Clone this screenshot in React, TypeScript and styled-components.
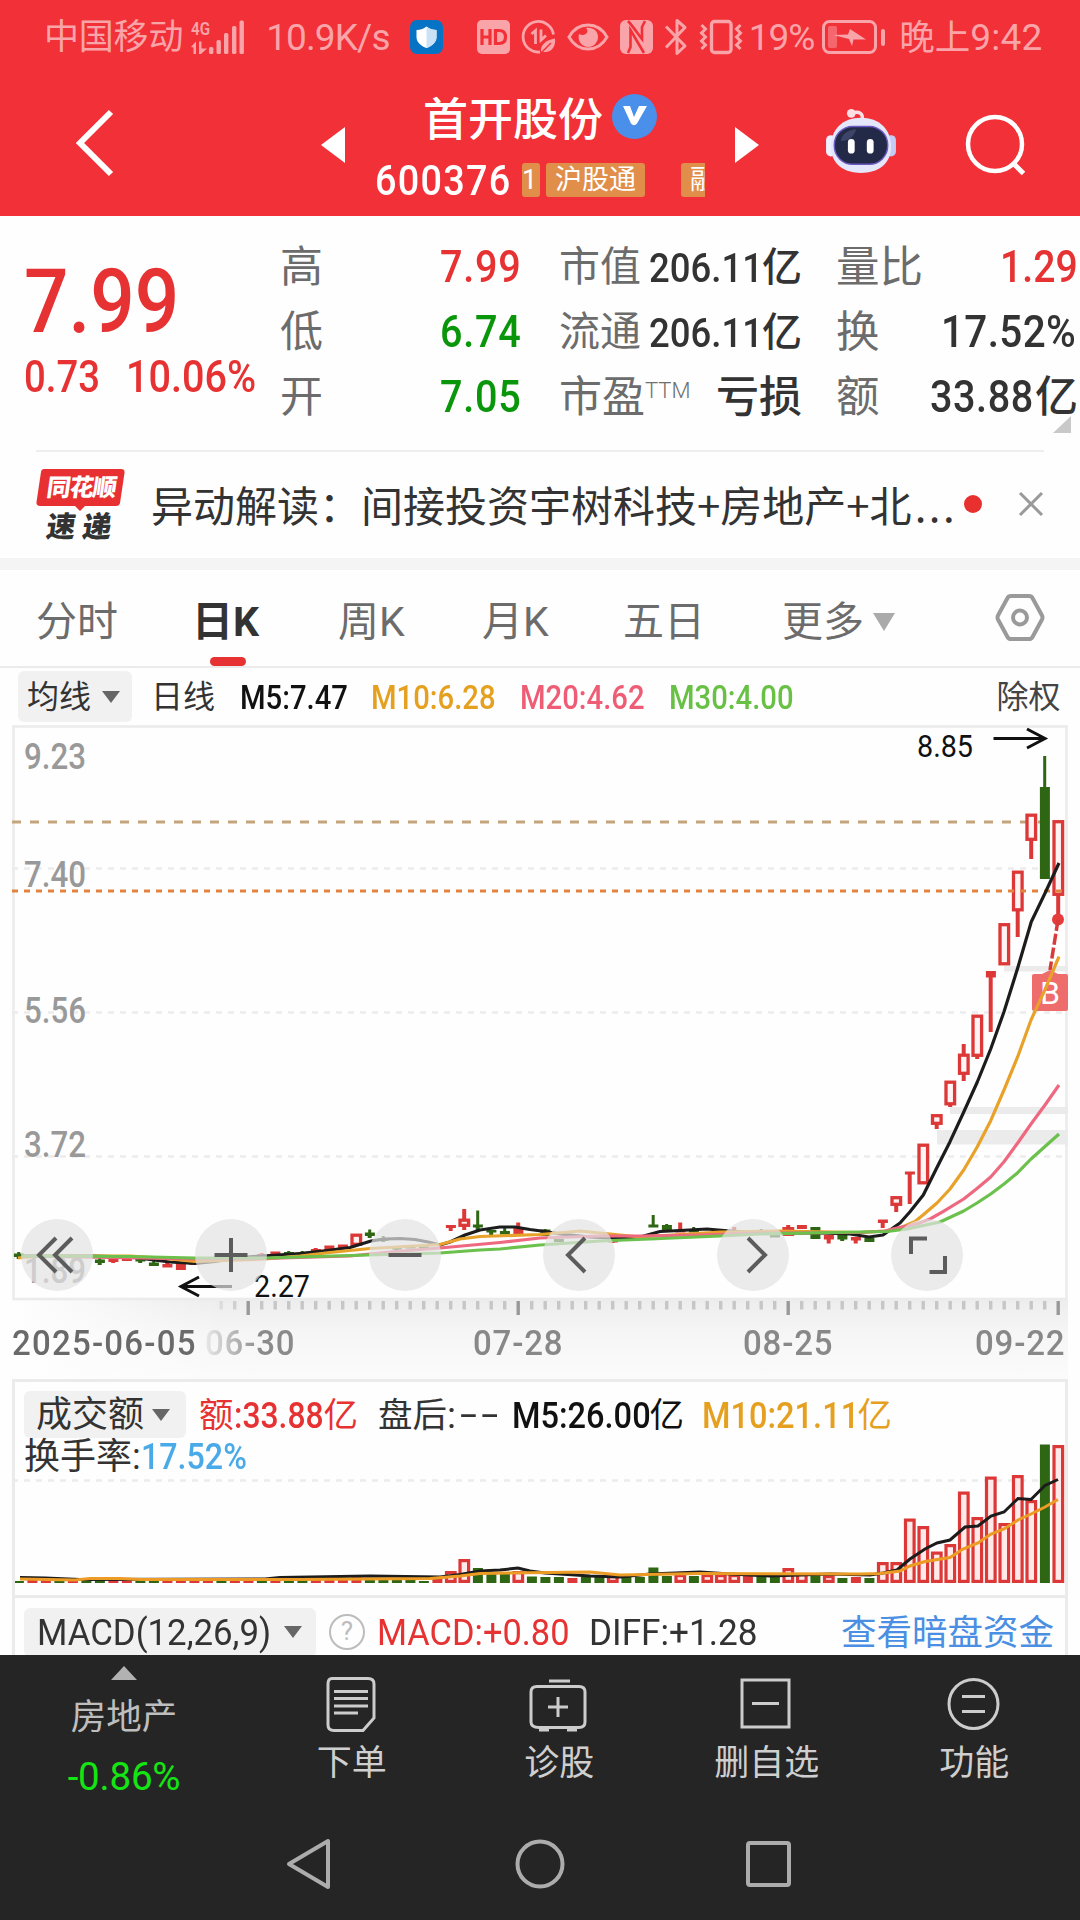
import React from 'react';
import styled, { createGlobalStyle, css } from 'styled-components';

const RED = '#e63232';
const CANDLE_RED = '#dc3838';
const CANDLE_GREEN = '#2f6614';
const GREEN = '#0a960a';
const INK = '#333333';
const MUTED = '#6c6c6c';
const AMBER = '#e5a020';
const PINK = '#ee5d75';
const LIME = '#68c044';

const GlobalStyle = createGlobalStyle`
  * { box-sizing: border-box; }
  html, body { margin: 0; padding: 0; }
  body {
    width: 1080px;
    height: 1920px;
    overflow: hidden;
    background: #fefefe;
    font-family: Roboto, "Noto Sans CJK SC", sans-serif;
    color: ${INK};
  }
  svg { display: block; flex: none; overflow: visible; }
`;

const Screen = styled.div`
  width: 1080px;
  height: 1920px;
  display: flex;
  flex-direction: column;
  overflow: hidden;
`;

type TextProps = { $size: number; $color?: string; $ls?: number; $weight?: number; $gap?: number };
const Text = styled.span<TextProps>`
  flex: none;
  white-space: nowrap;
  line-height: 1.1;
  padding-top: 3px;
  font-size: ${(p) => p.$size}px;
  font-weight: ${(p) => p.$weight ?? 400};
  letter-spacing: ${(p) => p.$ls ?? 0}px;
  margin-left: ${(p) => p.$gap ?? 0}px;
  ${(p) => p.$color && css`color: ${p.$color};`}
`;

/* Figures are set in a narrowed cut: $w is the slot they take, $sx the narrowing. */
const Figure = styled(Text)<{ $w: number; $sx: number }>`
  width: ${(p) => p.$w}px;
  transform: scaleX(${(p) => p.$sx});
  transform-origin: 0 50%;
`;

const Row = styled.div<{ $h?: number; $pl?: number }>`
  display: flex;
  align-items: center;
  ${(p) => p.$h && css`height: ${p.$h}px;`}
  padding-left: ${(p) => p.$pl ?? 0}px;
`;

const Spaced = styled.div<{ $gap: number; $lift?: number }>`
  flex: none;
  margin-left: ${(p) => p.$gap}px;
  margin-bottom: ${(p) => p.$lift ?? 0}px;
`;

/* ---------- status bar and header ---------- */

const TopArea = styled.header`
  flex: none;
  height: 216px;
  background: #f13038;
  color: #fff;
`;

const StatusBar = styled.div`
  height: 74px;
  padding-left: 44px;
  display: flex;
  align-items: center;
  color: #f9a4a8;
`;

const HeaderRow = styled.div`
  height: 142px;
  padding-left: 74px;
  display: flex;
  align-items: center;
`;

const TitleBlock = styled.div`
  width: 330px;
  margin-left: 30px;
  display: flex;
  flex-direction: column;
`;

const TitleLine = styled.div`
  height: 70px;
  display: flex;
  align-items: center;
  padding-left: 48px;
`;

const CodeLine = styled.div`
  height: 52px;
  display: flex;
  align-items: center;
`;

const Verified = styled.span`
  width: 45px;
  height: 45px;
  margin: 0 0 6px 9px;
  border-radius: 50%;
  background: #4a90ea;
  display: grid;
  place-items: center;
`;

const TagStrip = styled.div`
  width: 183px;
  height: 34px;
  margin-left: 12px;
  display: flex;
  overflow: hidden;
`;

const Tag = styled.span<{ $w: number; $gap?: number; $pl?: number }>`
  flex: none;
  width: ${(p) => p.$w}px;
  height: 34px;
  margin-left: ${(p) => p.$gap ?? 0}px;
  padding-left: ${(p) => p.$pl ?? 0}px;
  border-radius: 3px;
  overflow: hidden;
  background: #e28e4b;
  font-size: 27px;
  line-height: 35px;
  white-space: nowrap;
`;

function StatusIcons() {
  return (
    <>
      <Spaced $gap={7}>
        <svg width="54" height="36" viewBox="191 18 54 36" fill="#f9a4a8">
          <text x="192" y="33.500" fontSize="19" fontWeight="600" textLength="19" lengthAdjust="spacingAndGlyphs">4G</text>
          <path d="M192 46 L197 40.5 V53 H194.5 V46.5 Z M200 40.5 H202.5 V47.5 L208 47.5 L202 53 H200 Z" />
          <rect x="210" y="46" width="4.4" height="7" rx="1.5" />
          <rect x="217.5" y="39" width="4.4" height="14" rx="1.5" />
          <rect x="225" y="32" width="4.4" height="21" rx="1.5" />
          <rect x="233" y="25" width="4.4" height="28" rx="1.5" />
          <rect x="240.5" y="19.5" width="4.4" height="33.5" rx="1.5" />
        </svg>
      </Spaced>
      <Text $size={37} $gap={22} $ls={-0.9}>10.9K/s</Text>
      <Spaced $gap={20}>
        <svg width="33" height="34" viewBox="0 0 33 34">
          <rect width="33" height="34" rx="7" fill="#0773c4" />
          <path d="M16.5 6.5 C20 9.5 23 9.8 26.5 10 V17 C26.5 22.5 22 26 16.5 28 C11 26 6.5 22.5 6.5 17 V10 C10 9.8 13 9.5 16.5 6.5Z" fill="#fff" />
          <path d="M16.5 6.5 C20 9.5 23 9.8 26.5 10 V17 C26.5 22.5 22 26 16.5 28Z" fill="#c9e2f6" />
        </svg>
      </Spaced>
      <Spaced $gap={34}>
        <svg width="33" height="34" viewBox="0 0 33 34">
          <rect width="33" height="34" rx="5" fill="#f9a4a8" />
          <path d="M5 9 V25 M13 9 V25 M5 17 H13 M18.500 10.500 V23.500 H22 C27.500 23.500 28.500 20 28.500 17 C28.500 14 27.500 10.500 22 10.500Z" stroke="#f13038" strokeWidth="3.2" fill="none" />
        </svg>
      </Spaced>
      <Spaced $gap={12}>
        <svg width="34" height="34" viewBox="0 0 34 34" fill="none" stroke="#f9a4a8" strokeWidth="2.800">
          <path d="M18 32 A15.300 15.300 0 1 1 31.500 14.500" />
          <path d="M9.500 14 L13.500 10.500 V24" />
          <path d="M19 9.500 V20 L24 15.500" />
          <path d="M19 31.500 C18 25 24 20 33 18.500 C34 27 29 34 19 31.500Z" fill="#f9a4a8" stroke="none" />
          <path d="M20 32 L29 23" stroke="#f13038" strokeWidth="1.500" />
        </svg>
      </Spaced>
      <Spaced $gap={11}>
        <svg width="42" height="30" viewBox="0 0 42 30" fill="none" stroke="#f9a4a8" strokeWidth="3">
          <path d="M2 15 C11 -1 31 -1 40 15 C31 31 11 31 2 15Z" />
          <path d="M19 6 C23 10 18 15 12 12 C10 20 16 25 21 25 C27 25 31 20 31 15 C31 9 26 5 19 6Z" fill="#f9a4a8" stroke="none" />
        </svg>
      </Spaced>
      <Spaced $gap={11}>
        <svg width="33" height="34" viewBox="0 0 33 34">
          <rect width="33" height="34" rx="6" fill="#f9a4a8" />
          <path d="M8 1 C12 5 18 14 22 19 V7 L25 1 M8 33 L10.500 27 V10 L24 33" fill="none" stroke="#f13038" strokeWidth="2.600" />
        </svg>
      </Spaced>
      <Spaced $gap={11}>
        <svg width="24" height="38" viewBox="0 0 24 38" fill="none" stroke="#f9a4a8" strokeWidth="3" strokeLinejoin="round">
          <path d="M2 8.500 L21 28 L13 35.500 V2.500 L21 9.500 L2 29.500" />
        </svg>
      </Spaced>
      <Spaced $gap={12}>
        <svg width="42" height="34" viewBox="0 0 42 34" fill="none" stroke="#f9a4a8" strokeWidth="3">
          <rect x="11.500" y="1.500" width="19.500" height="31" rx="3" strokeWidth="3.400" />
          <path d="M1.500 5 L5.500 9 L1.500 13 L5.500 17 L1.500 21 L5.500 25 L1.500 29" />
          <path d="M40.500 5 L36.500 9 L40.500 13 L36.500 17 L40.500 21 L36.500 25 L40.500 29" />
        </svg>
      </Spaced>
      <Text $size={37} $gap={7} $ls={-1}>19%</Text>
      <Spaced $gap={8}>
        <svg width="64" height="34" viewBox="0 0 64 34">
          <rect x="1.500" y="1.500" width="52" height="31" rx="6" fill="none" stroke="#f9a4a8" strokeWidth="3" />
          <rect x="6" y="6" width="9" height="22" rx="2" fill="#f5676d" />
          <path d="M11 15 L26 14.500 L28 9 L44 19.500 L31.500 19.500 L30 26 L27 19Z" fill="#f9a4a8" />
          <rect x="59" y="9" width="4" height="17" rx="2" fill="#f9a4a8" />
        </svg>
      </Spaced>
      <Text $size={35.500} $gap={13}>晚上</Text>
      <Text $size={37} $gap={0} $ls={0.200}>9:42</Text>
    </>
  );
}

function Robot() {
  return (
    <svg width="72" height="66" viewBox="0 0 74 68">
      <circle cx="27" cy="5.500" r="4.500" fill="#fbdfe4" />
      <path d="M28 5 C36 3 39 6 38.500 12" fill="none" stroke="#fbdfe4" strokeWidth="3.500" />
      <rect x="1" y="28" width="10" height="22" rx="5" fill="#eef0ff" />
      <rect x="63" y="28" width="10" height="22" rx="5" fill="#c4ccf4" />
      <path d="M37 10 C56 10 68 22 68 40 C68 58 54 67 37 67 C20 67 6 58 6 40 C6 22 18 10 37 10Z" fill="#e4e6fa" />
      <rect x="9.500" y="19" width="55" height="39" rx="19" fill="#232a48" stroke="#6a58c0" strokeWidth="1.500" />
      <path d="M16 34 C18 24 28 22 32 22 C30 30 24 34 16 34Z" fill="#3c4468" />
      <rect x="23.500" y="32" width="7" height="15" rx="3.500" fill="#fff" />
      <rect x="43" y="32" width="7" height="15" rx="3.500" fill="#fff" />
    </svg>
  );
}

function Header() {
  return (
    <TopArea>
      <StatusBar>
        <Text $size={35} $ls={-0.2}>中国移动</Text>
        <StatusIcons />
      </StatusBar>
      <HeaderRow>
        <Spaced $gap={0} $lift={5}>
          <svg width="42" height="68" viewBox="0 0 42 68"><path d="M37 3 L6 34 L37 65" fill="none" stroke="#fff" strokeWidth="6" /></svg>
        </Spaced>
        <Spaced $gap={205}>
          <svg width="24" height="36" viewBox="0 0 24 36"><path d="M24 0 V36 L0 18Z" fill="#fff" /></svg>
        </Spaced>
        <TitleBlock>
          <TitleLine>
            <Text $size={45} $weight={500}>首开股份</Text>
            <Verified>
              <svg width="24" height="20" viewBox="0 0 24 20"><path d="M0 0 H7 L11 11 L16 0 H24 L14 17.500 Q11 21 8 17.500Z" fill="#fff" /></svg>
            </Verified>
          </TitleLine>
          <CodeLine>
            <Figure $w={135} $sx={0.9} $size={42} $weight={500} $ls={1.400}>600376</Figure>
            <TagStrip>
              <Tag $w={18}>1</Tag>
              <Tag $w={99} $gap={6} $pl={9}>沪股通</Tag>
              <Tag $w={46} $gap={36} $pl={9}>融</Tag>
            </TagStrip>
          </CodeLine>
        </TitleBlock>
        <Spaced $gap={30}>
          <svg width="24" height="36" viewBox="0 0 24 36"><path d="M0 0 V36 L24 18Z" fill="#fff" /></svg>
        </Spaced>
        <Spaced $gap={66} $lift={8}><Robot /></Spaced>
        <Spaced $gap={68} $lift={2}>
          <svg width="62" height="64" viewBox="0 0 62 64" fill="none" stroke="#fff" strokeWidth="4.500">
            <circle cx="30" cy="32" r="27" />
            <path d="M48 51 L58.500 61.500" strokeWidth="5" />
          </svg>
        </Spaced>
      </HeaderRow>
    </TopArea>
  );
}

/* ---------- quote summary ---------- */

const Quote = styled.section`
  flex: none;
  height: 234px;
  display: flex;
  padding-top: 18px;
`;

const PriceBlock = styled.div`
  width: 280px;
  padding: 17px 0 0 24px;
`;

const BigPrice = styled.div`
  width: 160px;
  height: 100px;
  font-size: 89px;
  line-height: 101px;
  font-weight: 500;
  transform: scaleX(0.88);
  transform-origin: 0 50%;
  color: ${RED};
`;

const StatCol = styled.div<{ $w: number; $gap?: number }>`
  flex: none;
  width: ${(p) => p.$w}px;
  margin-left: ${(p) => p.$gap ?? 0}px;
`;

const Stat = styled.div`
  height: 65px;
  display: flex;
  align-items: center;
  justify-content: space-between;
`;

const Sup = styled.sup`
  font-size: 22px;
  line-height: 1;
  vertical-align: 14px;
  font-weight: 300;
  color: #707070;
`;

const CornerWrap = styled.div`
  position: relative;
`;

const Corner = styled.i`
  position: absolute;
  right: 7px;
  bottom: -4px;
  border-left: 18px solid transparent;
  border-bottom: 17px solid #c9c9c9;
`;

function QuotePanel() {
  return (
    <Quote>
      <PriceBlock>
        <BigPrice>7.99</BigPrice>
        <Row $h={50}>
          <Figure $w={102} $sx={0.88} $size={43.5} $weight={500} $color={RED}>0.73</Figure>
          <Figure $w={140} $sx={0.91} $size={43.5} $weight={500} $color={RED}>10.06%</Figure>
        </Row>
      </PriceBlock>
      <StatCol $w={241}>
        {[['高', '7.99', RED], ['低', '6.74', GREEN], ['开', '7.05', GREEN]].map(([label, value, color]) => (
          <Stat key={label}>
            <Text $size={43} $color={MUTED}>{label}</Text>
            <Figure $w={81} $sx={0.91} $size={43.5} $weight={500} $ls={0.800} $color={color}>{value}</Figure>
          </Stat>
        ))}
      </StatCol>
      <StatCol $w={243} $gap={38}>
        {['市值', '流通'].map((label) => (
          <Stat key={label}>
            <Text $size={41} $color={MUTED}>{label}</Text>
            <Row>
              <Figure $w={113} $sx={0.88} $size={41.5} $weight={500}>206.11</Figure>
              <Text $size={40} $weight={500}>亿</Text>
            </Row>
          </Stat>
        ))}
        <Stat>
          <Text $size={43} $color={MUTED}>市盈<Sup>TTM</Sup></Text>
          <Text $size={43} $weight={500}>亏损</Text>
        </Stat>
      </StatCol>
      <StatCol $w={242} $gap={34}>
        <CornerWrap>
          <Stat>
            <Text $size={43.5} $color={MUTED}>量比</Text>
            <Figure $w={78} $sx={0.9} $size={43.5} $weight={500} $color={RED}>1.29</Figure>
          </Stat>
          <Stat>
            <Text $size={43.5} $color={MUTED}>换</Text>
            <Figure $w={137} $sx={0.93} $size={43.5} $weight={500} $ls={0.400}>17.52%</Figure>
          </Stat>
          <Stat>
            <Text $size={43.5} $color={MUTED}>额</Text>
            <Row>
              <Figure $w={105} $sx={0.91} $size={43.5} $weight={500} $ls={0.600}>33.88</Figure>
              <Text $size={43} $weight={500}>亿</Text>
            </Row>
          </Stat>
          <Corner />
        </CornerWrap>
      </StatCol>
    </Quote>
  );
}

/* ---------- news strip ---------- */

const News = styled.section`
  flex: none;
  height: 108px;
  margin: 0 36px;
  border-top: 2px solid #eeeeee;
  display: flex;
  align-items: center;
`;

const NewsText = styled.div`
  margin-left: 25px;
  padding-bottom: 3px;
  width: 809px;
  font-family: "Noto Sans CJK SC", sans-serif;
  font-size: 42px;
  line-height: 50px;
  white-space: nowrap;
`;

const Dots = styled.span`
  margin-left: 3px;
  letter-spacing: 2.500px;
`;

const Band = styled.div`
  flex: none;
  height: 12px;
  background: #f4f4f4;
`;

const Dot = styled.i`
  width: 18px;
  height: 18px;
  margin: 0 0 3px 6px;
  border-radius: 50%;
  background: #e8302f;
`;

function NewsStrip() {
  return (
    <News>
      <svg width="90" height="76" viewBox="0 0 90 76" fontFamily="'Noto Sans CJK SC', sans-serif">
        <path d="M8 2 H85 Q89 2 88.500 6 L84 36 Q83.500 39 80 39 H49 L44 44 L39 39 H4 Q0 39 0.500 35 L5 5 Q5.500 2 8 2Z" fill="#e83032" />
        <text x="14" y="29.500" fontSize="24" fontWeight="900" fill="#fff" transform="skewX(-8)" textLength="70">同花顺</text>
        <text x="19" y="70" fontSize="29" fontWeight="900" fill="#333" transform="skewX(-8)" textLength="65">速递</text>
      </svg>
      <NewsText>异动解读：间接投资宇树科技+房地产+北<Dots>...</Dots></NewsText>
      <Dot />
      <Spaced $gap={36} $lift={3}>
        <svg width="26" height="26" viewBox="0 0 26 26"><path d="M2 2 L24 24 M24 2 L2 24" stroke="#9a9a9a" strokeWidth="3" /></svg>
      </Spaced>
    </News>
  );
}

/* ---------- period tabs ---------- */

const Tabs = styled.nav`
  flex: none;
  height: 98px;
  border-bottom: 2px solid #ebebeb;
  display: flex;
  padding-left: 36px;
`;

const Tab = styled.div<{ $w: number; $active?: boolean }>`
  width: ${(p) => p.$w}px;
  font-size: 41px;
  font-weight: ${(p) => (p.$active ? 700 : 400)};
  color: ${(p) => (p.$active ? INK : MUTED)};
  white-space: nowrap;
  display: flex;
  flex-direction: column;
  line-height: 48px;
  padding-top: 28px;
`;

const Underline = styled.i`
  width: 36px;
  height: 9px;
  margin: 11px 0 0 18px;
  border-radius: 5px;
  background: ${RED};
`;

const Caret = styled.i<{ $w: number; $h: number; $gap?: number; $color?: string }>`
  flex: none;
  display: inline-block;
  margin-left: ${(p) => p.$gap ?? 0}px;
  border-left: ${(p) => p.$w / 2}px solid transparent;
  border-right: ${(p) => p.$w / 2}px solid transparent;
  border-top: ${(p) => p.$h}px solid ${(p) => p.$color ?? '#666'};
`;

function PeriodTabs() {
  return (
    <Tabs>
      <Tab $w={156}>分时</Tab>
      <Tab $w={146} $active>日K<Underline /></Tab>
      <Tab $w={144}>周K</Tab>
      <Tab $w={141}>月K</Tab>
      <Tab $w={159}>五日</Tab>
      <Tab $w={213}>
        <Row>更多<Caret $w={22} $h={18} $gap={9} $color="#aaaaaa" /></Row>
      </Tab>
      <Row $h={96}>
        <svg width="50" height="48" viewBox="0 0 50 48" fill="none" stroke="#9a9a9a" strokeWidth="4">
          <path d="M16 2 H34 Q36.500 2 37.500 4 L47 21.500 Q48 23.500 47 25.500 L37.500 43 Q36.500 45 34 45 H16 Q13.500 45 12.500 43 L3 25.500 Q2 23.500 3 21.500 L12.500 4 Q13.500 2 16 2Z" />
          <circle cx="25" cy="23.500" r="7" />
        </svg>
      </Row>
    </Tabs>
  );
}

/* ---------- indicator legends ---------- */

const Legend = styled.div<{ $h: number; $pl: number }>`
  flex: none;
  height: ${(p) => p.$h}px;
  padding-left: ${(p) => p.$pl}px;
  display: flex;
  align-items: center;
`;

const Picker = styled.div<{ $w: number; $h: number; $pl: number }>`
  flex: none;
  width: ${(p) => p.$w}px;
  height: ${(p) => p.$h}px;
  padding-left: ${(p) => p.$pl}px;
  border-radius: 6px;
  background: #f1f1f1;
  display: flex;
  align-items: center;
`;

function AverageLegend() {
  return (
    <Legend $h={57} $pl={18}>
      <Picker $w={114} $h={51} $pl={9}>
        <Text $size={32}>均线</Text>
        <Caret $w={18} $h={12} $gap={11} />
      </Picker>
      <Text $size={32} $gap={19}>日线</Text>
      <Figure $w={131} $sx={0.86} $size={34} $gap={25} $weight={500} $color="#111">M5:7.47</Figure>
      <Figure $w={148.5} $sx={0.86} $size={34} $weight={500} $color={AMBER}>M10:6.28</Figure>
      <Figure $w={149} $sx={0.86} $size={34} $weight={500} $color={PINK}>M20:4.62</Figure>
      <Figure $w={328} $sx={0.86} $size={34} $weight={500} $color={LIME}>M30:4.00</Figure>
      <Text $size={32} $color="#444">除权</Text>
    </Legend>
  );
}

/* ---------- price chart ---------- */

const LAST_X = 1058.2;
const STEP = 13.5;
const slotX = (slot: number) => LAST_X - slot * STEP;

type Candle = [slot: number, colour: 'r' | 'g', top: number, bottom: number, high: number, low: number];

const CANDLES: Candle[] = [
  [0, 'r', 820, 896, 820, 919], [1, 'g', 787, 879, 756, 879], [2, 'r', 813.5, 841, 813.5, 859],
  [3, 'r', 870.5, 911.5, 870.5, 937], [4, 'r', 923, 965.5, 923, 965], [5, 'r', 971, 977.5, 971, 1032],
  [6, 'r', 1014.5, 1057, 1014.5, 1059], [7, 'r', 1053.5, 1075, 1044, 1081], [8, 'r', 1080.5, 1105.5, 1080.5, 1107],
  [9, 'r', 1114, 1125, 1114, 1129], [10, 'r', 1143.5, 1184.5, 1143.5, 1184], [11, 'r', 1171.5, 1174.5, 1171.5, 1204],
  [12, 'r', 1196, 1206, 1196, 1212], [13, 'r', 1219.5, 1223, 1219.5, 1228], [14, 'g', 1238, 1242, 1238, 1242],
  [15, 'r', 1237, 1240.5, 1237, 1243.5], [16, 'g', 1234.5, 1239.5, 1234, 1241], [17, 'r', 1235, 1239.5, 1235, 1243.5],
  [18, 'g', 1227, 1239, 1227, 1239], [19, 'r', 1225, 1229, 1225, 1229], [20, 'r', 1227, 1236, 1225, 1236],
  [21, 'g', 1235, 1236.5, 1235, 1237], [22, 'g', 1230, 1232, 1229, 1232], [23, 'r', 1230, 1232, 1230, 1232],
  [24, 'r', 1230, 1232, 1227, 1232], [27, 'g', 1230, 1231, 1227, 1232], [28, 'r', 1230, 1231, 1222.5, 1231],
  [29, 'g', 1225, 1231, 1224, 1231], [30, 'g', 1224.5, 1227.5, 1215, 1227], [33, 'r', 1240, 1241, 1240, 1243],
  [37, 'g', 1239, 1242, 1239, 1242], [38, 'g', 1229.5, 1236, 1229, 1236], [40, 'r', 1227, 1234, 1222.5, 1234],
  [41, 'g', 1231, 1234.5, 1227, 1234.5], [42, 'g', 1230, 1232, 1230, 1235], [43, 'g', 1224.5, 1227.5, 1210.5, 1230],
  [44, 'r', 1218.5, 1227, 1209, 1230], [45, 'r', 1225, 1228, 1225, 1231], [47, 'g', 1246, 1248, 1244, 1248],
  [48, 'g', 1246, 1248, 1246, 1248], [49, 'g', 1247, 1248, 1246, 1251], [50, 'g', 1238, 1241, 1236, 1242],
  [51, 'g', 1232.5, 1236, 1229.5, 1238], [52, 'r', 1233.5, 1246, 1233.5, 1246], [53, 'r', 1244.5, 1248, 1244.5, 1248],
  [54, 'r', 1245.5, 1251, 1245.5, 1251], [55, 'r', 1249, 1252.5, 1248, 1252.5], [56, 'g', 1252, 1254, 1251, 1254],
  [57, 'g', 1252, 1255, 1251, 1255], [58, 'r', 1251.5, 1254, 1251.5, 1254], [59, 'r', 1254, 1256, 1253, 1256],
  [64, 'r', 1262, 1265, 1262, 1265], [65, 'r', 1262.5, 1270, 1262.5, 1270], [66, 'r', 1264, 1267.5, 1262, 1267.5],
  [67, 'g', 1262.5, 1266, 1260.5, 1266], [68, 'g', 1259, 1261.5, 1259, 1263], [69, 'r', 1258, 1261, 1258, 1261],
  [70, 'r', 1259, 1262, 1259, 1263], [71, 'g', 1259.5, 1263, 1258, 1265], [77, 'g', 1253.5, 1257, 1252, 1259],
];

const M5 = '22,1256 93,1256 130,1257 150,1259.5 170,1262 195,1263.5 215,1261.5 240,1257.5 270,1255.5 300,1253.5 327,1250.5 350,1247.5 371,1241 385,1239 400,1238.5 415,1239.5 428,1242 440,1245 450,1242 465,1235 480,1230 500,1227 515,1227 530,1229.5 545,1231.5 560,1234 590,1237 620,1238.5 640,1237 660,1231.5 680,1230.5 707,1229 730,1231 760,1233 820,1233 850,1234 869,1237 883,1235 900,1223 910,1211.7 923.3,1195 936.7,1168 950,1141.7 963.3,1113 977.3,1082 990.7,1049 1004,1011.7 1017.7,968 1031.3,921.7 1045,893.3 1059,863';
const M10 = '18,1258 40,1256 130,1256 160,1258 195,1261.5 265,1259 300,1256 330,1252.5 370,1248.5 440,1244.5 460,1239 480,1236.5 540,1234.5 580,1231 610,1234 640,1237 720,1232 780,1231 860,1232.5 885,1231 900,1228 915,1221.5 923,1215 937,1203 950,1189 963.7,1170 977.3,1146.7 990.7,1120.7 1004,1090 1017.7,1056.7 1031,1020 1045,989.7 1059,956.7';
const M20 = '22,1256 195,1259 265,1258.5 350,1256 390,1252 440,1248 500,1242.5 540,1238 600,1236 640,1236 700,1235 760,1233 860,1232.5 885,1231 897,1228 917,1224 930,1219 943,1211.7 963.7,1199 977,1188.5 990.7,1177 1004,1161.7 1017.7,1143 1031,1124 1045,1105 1059,1085';
const M30 = '22,1256 130,1256.5 195,1258 265,1258 350,1255.5 440,1253 480,1250 500,1249 540,1245 600,1241 650,1239 720,1236 760,1234 860,1232 887,1231.5 907,1229 940,1222 963.7,1211 977,1203 990.7,1194 1004,1184 1017.7,1172.7 1031,1159 1059,1134';

const PriceArea = styled.section`
  position: relative;
  flex: none;
  height: 575px;
`;

const Controls = styled.div`
  position: absolute;
  left: 21px;
  top: 494px;
  display: flex;
  gap: 102px;
`;

const RoundButton = styled.button`
  width: 72px;
  height: 72px;
  padding: 0;
  border: 0;
  border-radius: 50%;
  background: rgba(226, 226, 226, 0.7);
  display: grid;
  place-items: center;
`;

const CONTROL_PATHS = [
  'M35 2 L18 19 L35 36 M19 2 L2 19 L19 36',
  'M20 2 V36 M3.500 19 H36.500',
  'M3.500 19 H36.500',
  'M26 2 L9 19 L26 36',
  'M15 2 L32 19 L15 36',
  'M4 18 V2.500 H20 M38 20 V36 H22.500',
];

function CandleShape({ candle }: { candle: Candle }) {
  const [slot, colour, top, bottom, high, low] = candle;
  const x = slotX(slot);
  const stroke = colour === 'r' ? CANDLE_RED : CANDLE_GREEN;
  const height = bottom - top;
  const hollow = colour === 'r' && height > 8;
  return (
    <g>
      {high < top && <path d={`M${x} ${high}V${top + 1}`} stroke={stroke} strokeWidth={colour === 'r' ? 4 : 3} />}
      {low > bottom && <path d={`M${x} ${bottom - 1}V${low}`} stroke={stroke} strokeWidth="4" />}
      {hollow ? (
        <rect x={x - 4.2} y={top + 1.7} width="8.600" height={height - 3.4} fill="#fff3f3" stroke={stroke} strokeWidth="3.300" />
      ) : (
        <rect x={x - 4.8} y={top} width="10" height={Math.max(height, 2.5)} fill={stroke} />
      )}
    </g>
  );
}

function PriceChart() {
  return (
    <PriceArea>
      <svg width="1080" height="575" viewBox="0 725 1080 575" fill="none" fontFamily="Roboto, sans-serif">
        <rect x="13.500" y="726.500" width="1053" height="572.500" stroke="#ebebeb" strokeWidth="2.600" />
        {[868.5, 1012.5, 1156.5].map((y) => (
          <path key={y} d={`M12 ${y}H1062`} stroke="#ececec" strokeWidth="2.600" strokeDasharray="6 6" />
        ))}
        <rect x="1004" y="966" width="64" height="5.500" fill="#ebebeb" />
        <rect x="950" y="1107" width="118" height="7" fill="#ebebeb" />
        <rect x="937" y="1130" width="131" height="14.500" fill="#ebebeb" />
        <g fill="#999" fontSize="36" fontWeight="500">
          {([['9.23', 768.5], ['7.40', 887], ['5.56', 1022.5], ['3.72', 1156.5], ['1.89', 1283]] as [string, number][]).map(([label, y]) => (
            <text key={label} x="24" y={y} textLength="62" lengthAdjust="spacingAndGlyphs">{label}</text>
          ))}
        </g>
        <path d="M12 822H1060" stroke="#c4a47c" strokeWidth="3" strokeDasharray="9 9" />
        {CANDLES.map((c) => <CandleShape key={c[0]} candle={c} />)}
        <path d="M12 891H1062" stroke="#e28440" strokeWidth="3" strokeDasharray="6 6" />
        <circle cx="1058" cy="919.500" r="6" fill="#e63c3c" />
        <path d="M1058 920 L1050 970" stroke="#d93a3a" strokeWidth="3.500" strokeDasharray="11 3" />
        <path d="M1032 976 Q1032 974 1034 974 H1042 L1050 970 L1058 974 H1066 Q1068 974 1068 976 V1009 Q1068 1011 1066 1011 H1034 Q1032 1011 1032 1009Z" fill="#ee6c6c" />
        <text x="1040" y="1004" fill="#fff" fontSize="31" textLength="20" lengthAdjust="spacingAndGlyphs">B</text>
        <g strokeWidth="3.200" strokeLinejoin="round">
          <polyline points={M5} stroke="#1c1c1c" />
          <polyline points={M10} stroke="#e8a22a" />
          <polyline points={M20} stroke="#ee6880" />
          <polyline points={M30} stroke="#6cc04c" />
        </g>
        <g stroke="#111" strokeWidth="3">
          <path d="M993.500 738.500H1044 M1027 729L1045 738.500L1027 748" />
          <path d="M232 1286.500H182 M199 1277L181 1286.500L199 1296" />
        </g>
        <g fill="#111" fontSize="31">
          <text x="917" y="757" textLength="56" lengthAdjust="spacingAndGlyphs">8.85</text>
          <text x="254" y="1297" textLength="56" lengthAdjust="spacingAndGlyphs">2.27</text>
        </g>
      </svg>
      <Controls>
        {CONTROL_PATHS.map((d) => (
          <RoundButton key={d}>
            <svg width="40" height="38" viewBox="0 0 40 38" fill="none" stroke="#5c5c5c" strokeWidth="4"><path d={d} /></svg>
          </RoundButton>
        ))}
      </Controls>
    </PriceArea>
  );
}

/* ---------- date axis ---------- */

const Axis = styled.div`
  flex: none;
  width: 1056px;
  height: 79px;
  margin-left: 12px;
  background:
    linear-gradient(90deg, #fefefe 0, rgba(254, 254, 254, 0) 210px),
    linear-gradient(180deg, #ededed 0, #f6f6f6 35px, #fbfbfb 79px);
`;

const AxisLabels = styled.div`
  display: flex;
  height: 50px;
  align-items: center;
`;

const FadedFigure = styled(Figure)`
  color: transparent;
  background: linear-gradient(90deg, #e8e8e8 0, #8a8a8a 60px);
  background-clip: text;
  -webkit-background-clip: text;
`;

function DateAxis() {
  const ticks = Array.from({ length: 63 }, (_, slot) => slot);
  return (
    <Axis>
      <svg width="1056" height="17" viewBox="12 1300 1056 17">
        {ticks.map((slot) => {
          const major = slot % 20 === 0;
          const fade = slot === 62 ? 0.45 : slot === 61 ? 0.75 : 1;
          return <rect key={slot} x={slotX(slot) - 1.7} y="1301" width="3.400" height={major ? 14 : 8.5} fill={major ? '#999' : '#c6c6c6'} opacity={fade} />;
        })}
      </svg>
      <AxisLabels>
        <Figure $w={192.5} $sx={0.93} $size={35.5} $weight={500} $ls={1.300} $color="#6a6a6a">2025-06-05</Figure>
        <FadedFigure $w={268} $sx={0.93} $size={35.5} $weight={500} $ls={0.900}>06-30</FadedFigure>
        <Figure $w={270} $sx={0.93} $size={35.5} $weight={500} $ls={0.900} $color="#888">07-28</Figure>
        <Figure $w={232.5} $sx={0.93} $size={35.5} $weight={500} $ls={0.900} $color="#888">08-25</Figure>
        <Figure $w={92} $sx={0.93} $size={35.5} $weight={500} $ls={0.900} $color="#888">09-22</Figure>
      </AxisLabels>
    </Axis>
  );
}

/* ---------- turnover panel ---------- */

const Panel = styled.section<{ $h: number }>`
  flex: none;
  width: 1056px;
  height: ${(p) => p.$h}px;
  margin-left: 12px;
  border: 3px solid #ebebeb;
  border-bottom: 0;
  overflow: hidden;
`;

type Bar = [colour: 'r' | 'g', top: number];
const BARS: Bar[] = [
  ['r', 1445], ['g', 1444.5], ['r', 1500], ['r', 1475], ['r', 1523], ['r', 1476.5], ['r', 1517], ['r', 1491.5],
  ['r', 1544], ['r', 1551.5], ['r', 1526], ['r', 1518.5], ['r', 1562], ['r', 1562], ['g', 1578], ['r', 1577],
  ['g', 1578], ['r', 1575], ['g', 1575], ['r', 1573], ['r', 1568], ['g', 1576], ['g', 1576], ['r', 1576],
  ['r', 1574], ['r', 1574], ['r', 1574], ['g', 1576], ['r', 1574], ['g', 1576], ['g', 1567.5], ['g', 1577],
  ['g', 1577], ['r', 1575], ['g', 1577], ['g', 1577], ['r', 1578], ['g', 1577], ['g', 1577], ['g', 1576.5],
  ['r', 1571], ['g', 1574], ['g', 1574], ['g', 1568], ['r', 1559], ['r', 1571], ['r', 1578], ['g', 1581],
  ['g', 1579], ['g', 1580], ['g', 1579], ['g', 1579], ['r', 1576], ['r', 1578], ['r', 1578], ['r', 1578],
  ['g', 1580], ['g', 1580], ['r', 1579], ['g', 1580], ['r', 1579], ['r', 1579], ['g', 1580], ['r', 1579],
  ['r', 1579], ['r', 1579], ['r', 1579], ['g', 1580], ['g', 1580], ['r', 1579], ['r', 1578], ['g', 1579],
  ['g', 1580], ['r', 1580], ['g', 1580], ['r', 1580], ['r', 1580], ['g', 1581],
];
const VOL_M5 = '20,1577.5 45,1578 80,1579.5 265,1579 280,1577.5 370,1576 440,1577 460,1574.5 480,1571 500,1570 518,1568 530,1571 545,1573 590,1576 620,1577 650,1574 700,1572 730,1574 770,1576 830,1574 870,1575 883,1573 897,1570 910,1559 925,1549 937,1543 950,1540 965,1527 978,1526 991,1516 1004,1512 1018,1498.5 1031,1499.5 1045,1485.5 1058,1479.5';
const VOL_M10 = '20,1579 75,1580 90,1578.5 120,1578.5 140,1579.5 300,1579.5 430,1578.5 460,1576 480,1573.5 590,1572 620,1575 700,1573.5 860,1574 880,1573.5 900,1571 910,1566 925,1561.5 950,1557.5 963,1549 978,1543 991,1534 1004,1529 1018,1520 1031,1514 1045,1507 1058,1499.5';

function TurnoverPanel() {
  return (
    <Panel $h={216}>
      <Legend $h={65} $pl={9}>
        <Picker $w={162} $h={47} $pl={12}>
          <Text $size={36}>成交额</Text>
          <Caret $w={18} $h={12} $gap={8} />
        </Picker>
        <Text $size={34.5} $gap={13} $color={RED}>额</Text>
        <Figure $w={90} $sx={0.86} $size={37} $weight={500} $color={RED}>:33.88</Figure>
        <Text $size={34.5} $color={RED}>亿</Text>
        <Text $size={34.5} $gap={20}>盘后</Text>
        <Figure $w={13} $sx={1} $size={37}>:</Figure>
        <Figure $w={51.5} $sx={1.7} $size={36} $ls={2.600}>--</Figure>
        <Figure $w={138} $sx={0.88} $size={37} $weight={500} $color="#111">M5:26.00</Figure>
        <Text $size={34.5} $color="#111">亿</Text>
        <Figure $w={155.5} $sx={0.88} $gap={18} $size={37} $weight={500} $color={AMBER}>M10:21.11</Figure>
        <Text $size={34.5} $color={AMBER}>亿</Text>
      </Legend>
      <Legend $h={18} $pl={9}>
        <Text $size={36}>换手率:</Text>
        <Figure $w={110} $sx={0.87} $size={37} $weight={500} $color="#4aaae8">17.52%</Figure>
      </Legend>
      <svg width="1056" height="128" viewBox="15 1465 1056 128" fill="none">
        <path d="M12 1480.500H1062" stroke="#ececec" strokeWidth="2.600" strokeDasharray="6 6" />
        {BARS.map(([colour, top], slot) => {
          const x = slotX(slot);
          const hollow = colour === 'r' && 1583 - top > 7;
          return hollow ? (
            <rect key={slot} x={x - 4.2} y={top + 1.6} width="8.600" height={1583 - top - 3.2} fill="#ffe9e9" stroke={CANDLE_RED} strokeWidth="3.200" />
          ) : (
            <rect key={slot} x={x - 4.8} y={top} width="10" height={Math.max(1583 - top, 2)} fill={colour === 'r' ? CANDLE_RED : CANDLE_GREEN} />
          );
        })}
        <polyline points={VOL_M5} stroke="#1c1c1c" strokeWidth="3" />
        <polyline points={VOL_M10} stroke="#ec9c24" strokeWidth="3" />
      </svg>
    </Panel>
  );
}

const Help = styled.span`
  flex: none;
  width: 36px;
  height: 36px;
  margin-left: 13px;
  border: 2.5px solid #bcbcbc;
  border-radius: 50%;
  color: #bcbcbc;
  font-size: 26px;
  line-height: 31px;
  text-align: center;
`;

function MacdPanel() {
  return (
    <Panel $h={60}>
      <Legend $h={68} $pl={9}>
        <Picker $w={292} $h={49} $pl={13}>
          <Figure $w={238} $sx={0.94} $size={37}>MACD(12,26,9)</Figure>
          <Caret $w={18} $h={12} $gap={9} />
        </Picker>
        <Help>?</Help>
        <Figure $w={212} $sx={0.93} $size={37} $gap={12} $color={RED}>MACD:+0.80</Figure>
        <Figure $w={252} $sx={0.95} $size={37}>DIFF:+1.28</Figure>
        <Text $size={35.5} $color="#4a8fe2">查看暗盘资金</Text>
      </Legend>
    </Panel>
  );
}

/* ---------- bottom bars ---------- */

const BottomBar = styled.footer`
  flex: none;
  height: 145px;
  background: #252525;
  color: #cfcfcf;
  display: flex;
`;

const IndexCell = styled.div`
  width: 248px;
  display: flex;
  flex-direction: column;
  align-items: center;
  padding-top: 11px;
`;

const ArrowUp = styled.i`
  border-left: 13px solid transparent;
  border-right: 13px solid transparent;
  border-bottom: 14px solid #b2b2b2;
`;

const ActionCell = styled.div`
  width: 207.5px;
  padding-top: 20px;
  display: flex;
  flex-direction: column;
  align-items: center;
  gap: 9px;
`;

const NavBar = styled.div`
  flex: none;
  height: 120px;
  background: #252525;
  display: flex;
  align-items: center;
  padding: 8px 0 0 285px;
`;

const ACTIONS = [
  { label: '下单', icon: <><path d="M8 3.500 H44 Q50 3.500 50 9 V43 L39 55.500 H10 Q4 55.500 4 50 V9 Q4 3.500 8 3.500Z" /><path d="M10 16.500H44 M10 23.500H44 M10 31H44 M10 38H34" /></> },
  { label: '诊股', icon: <><path d="M18 6H39 M6 11.500 H48 Q54 11.500 54 17 V47 Q54 52.500 48 52.500 H8 Q0 52.500 0 47 V17 Q0 11.500 6 11.500Z M8 55H18 M36 55H46 M27 22V42 M17 32H37" /></> },
  { label: '删自选', icon: <><rect x="3" y="5" width="47" height="47" /><path d="M13 28.500H40" /></> },
  { label: '功能', icon: <><circle cx="27.500" cy="29" r="24.500" /><path d="M16 21.500H39 M16 36.500H39" /></> },
];

function Bottom() {
  return (
    <>
      <BottomBar>
        <IndexCell>
          <ArrowUp />
          <Row $h={76}><Text $size={35.5} $color="#bebebe">房地产</Text></Row>
          <Row $h={51}><Text $size={38.5} $color="#14e614" $ls={-0.2}>-0.86%</Text></Row>
        </IndexCell>
        {ACTIONS.map(({ label, icon }) => (
          <ActionCell key={label}>
            <svg width="58" height="58" viewBox="-1 0 58 58" fill="none" stroke="#cccccc" strokeWidth="3">{icon}</svg>
            <Text $size={35}>{label}</Text>
          </ActionCell>
        ))}
      </BottomBar>
      <NavBar>
        <svg width="48" height="54" viewBox="0 0 48 54" fill="none" stroke="#acacac" strokeWidth="4" strokeLinejoin="round"><path d="M43 4 V50 L4 27Z" /></svg>
        <Spaced $gap={182}>
          <svg width="50" height="50" viewBox="0 0 50 50" fill="none" stroke="#acacac" strokeWidth="4"><circle cx="25" cy="25" r="22.500" /></svg>
        </Spaced>
        <Spaced $gap={180}>
          <svg width="48" height="48" viewBox="0 0 48 48" fill="none" stroke="#acacac" strokeWidth="4"><rect x="3" y="3" width="41" height="42" rx="2" /></svg>
        </Spaced>
      </NavBar>
    </>
  );
}

export default function App() {
  return (
    <Screen>
      <GlobalStyle />
      <Header />
      <QuotePanel />
      <NewsStrip />
      <Band />
      <PeriodTabs />
      <AverageLegend />
      <PriceChart />
      <DateAxis />
      <TurnoverPanel />
      <MacdPanel />
      <Bottom />
    </Screen>
  );
}
